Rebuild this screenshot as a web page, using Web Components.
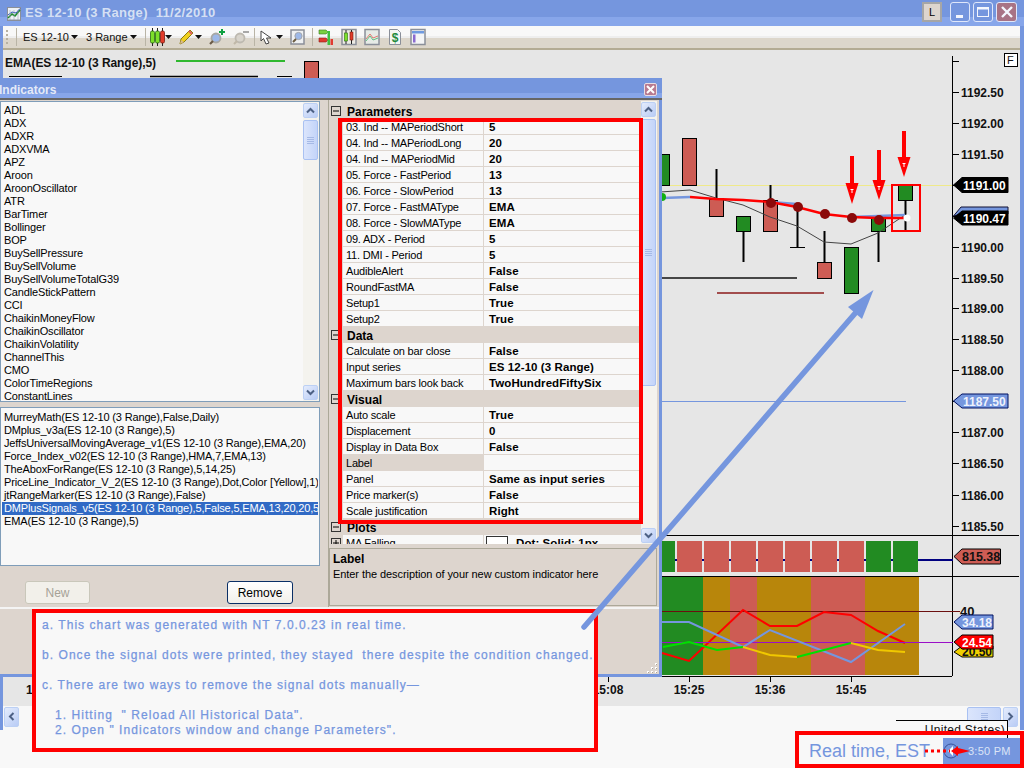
<!DOCTYPE html>
<html><head><meta charset="utf-8">
<style>
html,body{margin:0;padding:0;width:1024px;height:768px;overflow:hidden;background:#f8f8f8;font-family:"Liberation Sans",sans-serif;}
</style></head><body>
<trade-window></trade-window>
<task-strip></task-strip>
<indicators-dialog></indicators-dialog>
<red-frame style="left:338px;top:118px;width:305px;height:406px"></red-frame>
<note-box></note-box>
<clock-note></clock-note>
<callout-arrows></callout-arrows>
<script>
function def(name,css,html,init){
  customElements.define(name,class extends HTMLElement{
    constructor(){super();const s=this.attachShadow({mode:'open'});
      const h=typeof html==='function'?html(this):html;
      s.innerHTML='<style>'+css+'</style>'+h;
      if(init)init(this,s);}
  });
}
const BLUE='#7596de',FACE='#ddd5ce',LIGHT='#f8f8f8';
const chev=d=>`<svg width="9" height="7" viewBox="0 0 9 7"><path d="${d=='up'?'M1 5.5 4.5 2 8 5.5':d=='down'?'M1 1.500 4.500 5 8 1.500':''}" fill="none" stroke="#4d6185" stroke-width="2"/></svg>`;
def('scroll-btn',`:host{display:flex;align-items:center;justify-content:center;width:15px;height:15px;box-sizing:border-box;border:1px solid #bcd0f4;border-radius:2px;background:linear-gradient(135deg,#e4ecfd,#b9ccf5);flex:none}`,
  t=>t.getAttribute('dir')=='left'?`<svg width="7" height="9" viewBox="0 0 7 9"><path d="M5.5 1 2 4.5 5.5 8" fill="none" stroke="#4d6185" stroke-width="2"/></svg>`:t.getAttribute('dir')=='right'?`<svg width="7" height="9" viewBox="0 0 7 9"><path d="M1.5 1 5 4.5 1.5 8" fill="none" stroke="#4d6185" stroke-width="2"/></svg>`:chev(t.getAttribute('dir')));
def('scroll-thumb',`:host{display:flex;align-items:center;justify-content:center;box-sizing:border-box;border:1px solid #a9c1f2;border-radius:2px;background:linear-gradient(90deg,#dbe5fc,#c3d4f9);flex:none}
  i{display:block;width:7px;height:7px;background:repeating-linear-gradient(#a5b9e6 0 1px,transparent 1px 2px)}`,`<i></i>`);
def('v-scroll',`:host{display:flex;flex-direction:column;width:16px;background:#f4f3ee;flex:none;box-sizing:border-box;padding:1px 0;height:100%}
  .sp{flex:1}`,t=>`<scroll-btn dir="up"></scroll-btn><scroll-thumb style="height:${t.getAttribute('thumb')}px;width:15px;margin-top:2px"></scroll-thumb><div class="sp"></div><scroll-btn dir="down"></scroll-btn>`);

def('win-btn',`:host{display:flex;width:20px;height:20px;box-sizing:border-box;border:1px solid #dfe7fa;border-radius:3px;background:#7596de;align-items:center;justify-content:center;flex:none}
  :host([kind=close]){background:#a87385;width:21px}`,
  t=>{const k=t.getAttribute('kind');
   if(k=='min')return `<svg width="14" height="14"><rect x="3" y="10" width="7" height="3" fill="#f4f6fd"/></svg>`;
   if(k=='max')return `<svg width="14" height="14"><rect x="1.5" y="2.5" width="11" height="9" fill="none" stroke="#f4f6fd"/><rect x="1" y="2" width="12" height="2.500" fill="#f4f6fd"/></svg>`;
   return `<svg width="14" height="14"><path d="M2 2 12 12M12 2 2 12" stroke="#f4f6fd" stroke-width="2.4"/></svg>`;});
def('app-title',`:host{display:flex;align-items:flex-start;height:26px;box-sizing:border-box;background:linear-gradient(#7596de 0 17px,#87a6ea 17px);color:#dbe4f6;position:relative}
  .ic{margin:7px 4px 0 7px;flex:none}
  .t{font:bold 13px/26px "Liberation Sans",sans-serif;letter-spacing:.32px;white-space:pre;flex:1;opacity:.95}
  .l{width:20px;height:20px;box-sizing:border-box;border:2px solid #a6a6a6;background:${FACE};color:#000;font:11px/16px "Liberation Sans",sans-serif;text-align:center;margin:2px 8px 0 0}
  .b{display:flex;gap:3px;margin:2px 7px 0 0}`,
 `<svg class="ic" width="14" height="14" viewBox="0 0 14 14"><rect x=".5" y=".5" width="13" height="13" fill="#eef2f7" stroke="#8a8f99"/><path d="M1 11 5 7 8 9 13 3" fill="none" stroke="#1d8a2d" stroke-width="1.6"/><path d="M1 8 5 5 9 6 13 1.5" fill="none" stroke="#2c52b8"/><path d="M1 12.5H13M3 3V13M7 3V13M11 3V13" stroke="#9aa2b0" stroke-width=".6"/></svg>
  <div class="t">ES 12-10 (3 Range)  11/2/2010</div><div class="l">L</div><div class="b"><win-btn kind="min"></win-btn><win-btn kind="max"></win-btn><win-btn kind="close"></win-btn></div>`);
const caret=`<svg width="7" height="4" viewBox="0 0 7 4" style="flex:none"><path d="M0 0H7L3.5 4Z" fill="#111"/></svg>`;
const gap=w=>`<span style="width:${w}px;flex:none"></span>`;
def('app-toolbar',`:host{display:flex;align-items:center;height:24px;box-sizing:border-box;background:linear-gradient(#f8f8f8 0 10px,#eee 10px 12px,#dcd6cb 12px 22px,#b3ab93 22px);font:11px "Liberation Sans",sans-serif;color:#111;padding-left:3px;padding-bottom:2px}
  .hd{width:2px;height:15px;margin:0 8px 0 0;background:repeating-linear-gradient(#b7b1a2 0 2px,transparent 2px 4px);flex:none}
  .sp{width:1px;height:18px;background:#b9b4a6;flex:none}
  .i{display:flex;align-items:center;flex:none;white-space:nowrap}
  svg{flex:none}`,
 `<div class="hd"></div><div class="sp"></div>${gap(6)}
  <span class="i" style="width:47.5px">ES 12-10</span>${caret}
  ${gap(8.5)}<span class="i" style="width:44px">3 Range</span>${caret}
  ${gap(7.5)}<div class="sp"></div>${gap(4)}
  <svg width="15" height="18" viewBox="0 0 15 18"><path d="M2.500 0V18M7.500 0V18M12.500 0V18" stroke="#222"/><rect x=".5" y="3" width="4" height="12" rx="1.500" fill="#7ce02a" stroke="#2a6a10" stroke-width=".8"/><rect x="5.500" y="3" width="4" height="12" rx="1.500" fill="#7ce02a" stroke="#2a6a10" stroke-width=".8"/><rect x="10.500" y="3" width="4" height="12" rx="1.500" fill="#e23c2a" stroke="#7a1d10" stroke-width=".8"/></svg>
  ${gap(.5)}${caret}${gap(6.5)}
  <svg width="15" height="16" viewBox="0 0 15 16"><path d="M1 15 2 10 11 1 14 4 5 13Z" fill="#f0d020" stroke="#8a7a10"/><path d="M1 15 2 11 5 13Z" fill="#d8b890"/><path d="M10 2 13 5" stroke="#e06060" stroke-width="2"/></svg>
  ${gap(1)}${caret}${gap(6)}
  <svg width="18" height="18" viewBox="0 0 18 18"><circle cx="8" cy="10" r="4.500" fill="#9db8e8" stroke="#a8a8a4" stroke-width="1.800"/><path d="M5 13 2 16" stroke="#6a5a48" stroke-width="2.200"/><path d="M14 1V7M11 4H17" stroke="#0ea040" stroke-width="2"/></svg>
  ${gap(6)}
  <svg width="18" height="18" viewBox="0 0 18 18"><circle cx="8" cy="10" r="4.500" fill="#d8d4cc" stroke="#bdb9b0" stroke-width="1.800"/><path d="M5 13 2 16" stroke="#c0b8a8" stroke-width="2.200"/><path d="M11 4H17" stroke="#a8a8a8" stroke-width="2"/></svg>
  ${gap(4)}<div class="sp"></div>${gap(5)}
  <svg width="14" height="15" viewBox="0 0 14 15"><path d="M1 1V11L3.5 8.5 6 14 9 13 6.5 8H11Z" fill="#fff" stroke="#444"/></svg>
  ${gap(2)}${caret}${gap(7)}
  <svg width="15" height="16" viewBox="0 0 15 16"><rect x="1" y="1" width="13" height="14" fill="#eef0f2" stroke="#8a8f99" stroke-width="1.500"/><circle cx="8.500" cy="7" r="3.600" fill="#9db8e8" stroke="#a0a4ac"/><path d="M6 10 3 13" stroke="#6a5a40" stroke-width="2"/></svg>
  ${gap(7)}<div class="sp"></div>${gap(5)}
  <svg width="16" height="18" viewBox="0 0 16 18"><path d="M1 2H8L10 4 8 6H1Z" fill="#7ad040" stroke="#3a7a20" stroke-width=".6"/><path d="M1 10H8L10 12 8 14H1Z" fill="#e03a30" stroke="#902018" stroke-width=".6"/><rect x="9.500" y="3" width="2.500" height="14" fill="#3fc040"/><rect x="12.500" y="11" width="2.500" height="6" fill="#e03a30"/></svg>
  ${gap(7)}
  <svg width="16" height="18" viewBox="0 0 16 18"><rect x="1" y="1.500" width="14" height="15" fill="#ecebe4" stroke="#8a8f99" stroke-width="1.500"/><path d="M5 2V16M10.500 2V16" stroke="#222"/><rect x="3.500" y="5" width="3" height="8" fill="#7ce02a" stroke="#2a6a10" stroke-width=".6"/><rect x="9" y="4" width="3" height="8" fill="#e23c2a" stroke="#7a1d10" stroke-width=".6"/></svg>
  ${gap(7)}
  <svg width="16" height="18" viewBox="0 0 16 18"><rect x="1" y="1.500" width="14" height="15" fill="#e6ebe6" stroke="#8a8f99" stroke-width="1.500"/><path d="M2 11 6 6 9 10 14 8" fill="none" stroke="#e07a70"/><path d="M2 13 6 8 9 12 14 10" fill="none" stroke="#60c080"/></svg>
  ${gap(7)}
  <svg width="16" height="18" viewBox="0 0 16 18"><path d="M2.500 1.500H10.500L13.500 4.500V16.500H2.500Z" fill="#f4f6f4" stroke="#8a8f99"/><text x="8" y="14" text-anchor="middle" style="font:bold 12px 'Liberation Sans';fill:#1e8a3c">$</text></svg>
  ${gap(7)}
  <svg width="16" height="18" viewBox="0 0 16 18"><rect x="1" y="1.500" width="14" height="15" fill="#f4f5f6" stroke="#8a8f99" stroke-width="1.500"/><rect x="2" y="3" width="12" height="2.500" fill="#6f9ae0"/><rect x="3" y="6.500" width="2.500" height="8" fill="#8a6ad0"/></svg>`);

def('price-chart',`:host{display:block;flex:1;min-height:0;background:#e6e6e6}
  svg{display:block}text{font:bold 12px "Liberation Sans",sans-serif;fill:#111}`,()=>{
 const r=(x,y,w,h,f,s)=>`<rect x="${x}" y="${y}" width="${w}" height="${h}" fill="${f}"${s?` stroke="${s}"`:''}/>`;
 const l=(a,b,c,d,s,w)=>`<path d="M${a} ${b}L${c} ${d}" stroke="${s||'#000'}" stroke-width="${w||1}" fill="none"/>`;
 const pl=(pts,s,w)=>`<polyline points="${pts}" fill="none" stroke="${s}" stroke-width="${w}"/>`;
 const G='#228b22',R='#cd5c54',Y='#b8860b';
 let o='';
 o+=`<text x="5" y="67" style="letter-spacing:-.07px">EMA(ES 12-10 (3 Range),5)</text>`+r(176,60,109,2,'#2fb82f');
 o+=l(9,76.5,62,76.5)+l(150,76.5,258,76.5,'#000',1.5)+l(277,76.5,292,76.5);
 o+=`<rect x="304.5" y="61.5" width="14" height="20" fill="${R}" stroke="#000"/>`;
 o+=l(662,185.5,953,185.5,'#efe98a');o+=l(662,401.5,906,401.5,BLUE);
 o+=l(662,278,797,278,'#111',1.6)+l(717,293,824,293,'#8b1a1a',1.6);
 [[716,169,199],[743,231,262],[770,185,200],[797,203,247],[824,231,262],[878,231,262],[905,200,230]].forEach(w=>o+=l(w[0]+.5,w[1],w[0]+.5,w[2],'#000',2));
 o+=l(790,247.5,805,247.5);
 [[655,154,G,31],[682,138,R,47],[709,199,R,17],[736,216,G,15],[763,200,R,31],[817,262,R,16],[844,247,G,46],[871,216,G,15],[898,185,G,15]].forEach(c=>o+=`<rect x="${c[0]+.5}" y="${c[1]+.5}" width="14" height="${c[3]}" fill="${c[2]}" stroke="#000"/>`);
 o+=pl('660,192 690,190 716,198 743,205 770,217 797,226 824,242 851,244 878,233 905,215','#444',1);
 o+=pl('662,198 690,197','#7596de',2.5)+pl('770,202 797,204','#7596de',2.5)+pl('851,217 905,215','#7596de',2.5);
 o+=pl('690,197 716,199 743,200 770,202 797,207 824,214 851,217 878,218 905,218','#f00',2.4);
 [[771,203],[798,207],[825,214],[852,218],[879,220]].forEach(d=>o+=`<circle cx="${d[0]}" cy="${d[1]}" r="5" fill="#8b0a0a"/>`);
 o+=`<circle cx="662" cy="197" r="4" fill="#10b010"/><circle cx="907" cy="218" r="3.5" fill="#fff"/>`;
 [[852,156,183,204],[879,150,180,200],[904,131,157,177]].forEach(a=>{
   o+=r(a[0]-2,a[1],4,a[2]-a[1],'#f00')+`<path d="M${a[0]-6.5} ${a[2]}H${a[0]+6.5}L${a[0]} ${a[3]}Z" fill="#f00"/><path d="M${a[0]-1.5} ${a[2]+6.5}H${a[0]+1.5}M${a[0]} ${a[2]+6.5}V${a[2]+10}" stroke="#fff"/>`;});
 o+=`<rect x="892" y="185" width="28" height="46" fill="none" stroke="#f00" stroke-width="2"/>`;
 o+=l(3,535.5,1019,535.5)+l(662,576.5,1019,576.5);
 o+=l(952.5,56,952.5,676)+l(953,61.5,959,61.5);
 const lab=['1192.50','1192.00','1191.50','1191.00','1190.50','1190.00','1189.50','1189.00','1188.50','1188.00','1187.50','1187.00','1186.50','1186.00','1185.50'];
 const ys=[92,123,154,185,216,247,278,308,339,370,401,432,463,495,526];
 lab.forEach((t,i)=>{o+=l(953,ys[i]+.5,959,ys[i]+.5);if(i!=3&&i!=4&&i!=10)o+=`<text x="961" y="${ys[i]+4.5}">${t}</text>`;});
 o+=`<rect x="1004.5" y="53.5" width="13" height="13" fill="#fff" stroke="#000"/><text x="1007" y="64" style="font:11px 'Liberation Sans'">F</text>`;
 const mk=(y,w,h,f,st,tx,t)=>{return `<path d="M953.5 ${y} 962 ${y-h/2}H${953+w}V${y+h/2}H962Z" fill="${f}" stroke="${st}"/><text x="963" y="${y+4.5}" style="fill:${tx}">${t}</text>`;};
 o+=`<path d="M953.5 216 961 207H1008V214H961Z" fill="${BLUE}" stroke="#113"/>`;
 o+=mk(185,55,15,'#000','#000','#fff','1191.00');
 o+=mk(218,55,14,'#000','#000','#fff','1190.47');
 o+=mk(401,55,14,BLUE,'#001060','#eef2fc','1187.50');
 o+=l(662,560,953,560,'#000080',2);
 o+=r(655,541,20,31,G);
 [677,704,731,758,785,812,839].forEach(x=>o+=r(x,541,25,31,R));
 [866,893].forEach(x=>o+=r(x,541,25,31,G));
 o+=l(918,560,953,560,'#000080',2);
 o+=`<path d="M954 556.5 962 549H1000.5V564H962Z" fill="${R}" stroke="#000"/><text x="962" y="561" style="font-size:12.5px">815.38</text>`;
 [[655,48,G],[703,27,Y],[730,27,R],[757,54,Y],[811,54,R],[865,54,Y]].forEach(b=>o+=r(b[0],577,b[1],98,b[2]));
 o+=l(662,611.5,960,611.5,'#6b0f0f');
 o+=`<text x="960" y="616" style="font-size:13px">40</text>`;
 o+=pl('662,653 689,661 743,610 770,626 797,626 824,612 851,615 878,631 905,643','#f00',2);
 o+=l(662,642.5,953,642.5,'#9a10c8');
 o+=pl('662,622 689,622 743,647 770,630 851,662 905,624',BLUE,2);
 o+=pl('663,647 689,642 717,650 743,647','#00e000',2)+pl('743,647 770,655 797,657','#f0c800',2)+pl('797,657 851,643','#00e000',2)+pl('851,643 878,650 905,652','#f0c800',2);
 o+=`<path d="M954 652 962 646H993V657H962Z" fill="#f0d000" stroke="#000"/><text x="962" y="656">20.50</text>`;
 o+=`<path d="M954 622 962 615H993V629H962Z" fill="${BLUE}" stroke="#001060"/><text x="962" y="626.5" style="fill:#eef2fc">34.18</text>`;
 o+=`<path d="M954 642 962 635H993V649H962Z" fill="#f00" stroke="#000"/><text x="962" y="646.5" style="fill:#fff">24.54</text>`;
 o+=l(3,676.5,952,676.5);
 [[608,'15:08'],[689,'15:25'],[770,'15:36'],[851,'15:45']].forEach(t=>{o+=l(t[0]+.5,677,t[0]+.5,682)+`<text x="${t[0]}" y="694" text-anchor="middle">${t[1]}</text>`;});
 o+=`<text x="26" y="694">18</text>`;
 return `<svg width="1017" height="656" viewBox="3 50 1017 656">${o}</svg>`;
});
def('bottom-scroll',`:host{display:flex;height:24px;box-sizing:border-box;background:${LIGHT};align-items:center;padding:0 2px 3px 1px}
 .sp{flex:1}`,`<scroll-btn dir="left" style="height:20px;width:15px"></scroll-btn><div class="sp"></div><scroll-thumb style="width:34px;height:20px"></scroll-thumb><span style="width:2px"></span><scroll-btn dir="right" style="height:20px"></scroll-btn>`);
def('trade-window',`:host{display:flex;flex-direction:column;height:730px;box-sizing:border-box;background:${BLUE}}
 .in{flex:1;min-height:0;display:flex;flex-direction:column;margin:0 4px 0 3px}`,
 `<app-title></app-title><div class="in"><app-toolbar></app-toolbar><price-chart></price-chart><bottom-scroll></bottom-scroll></div>`);
def('task-strip',`:host{display:block;height:38px;background:${LIGHT}}`,``);

def('list-box',`:host{display:flex;box-sizing:border-box;border:1px solid #7f9db9;background:${LIGHT};overflow:hidden;font:11px/13px "Liberation Sans",sans-serif;letter-spacing:-.15px;color:#000}
 .l{flex:1;min-width:0;padding:var(--pt,2px) 1px 0}`,`<div class="l"><slot></slot></div><slot name="bar"></slot>`);
def('list-item',`:host{display:block;height:13px;padding-left:2px;white-space:nowrap;overflow:hidden}
 :host([sel]){background:#316ac5;color:#fff}`,`<slot></slot>`);
def('xp-button',`:host{display:flex;align-items:center;justify-content:center;box-sizing:border-box;width:66px;height:23px;border:1px solid #0a2f66;border-radius:3px;background:linear-gradient(#fff,#f2f0ea);font:12px "Liberation Sans",sans-serif;color:#000}
 :host([off]){border-color:#c9c7ba;background:#f2f0ea;color:#a6a297;width:65px}`,`<slot></slot>`);
def('prop-head',`:host{display:flex;height:16px;align-items:center;font:bold 12px "Liberation Sans",sans-serif;color:#000;background:${FACE};white-space:nowrap}
 .t{width:14px;flex:none;display:flex;justify-content:center}.x{flex:1;padding:1px 0 0 4px}`,
 `<div class="t"><svg width="10" height="10"><rect x=".5" y=".5" width="9" height="9" fill="none" stroke="#333"/><path d="M2 5H8" stroke="#000"/></svg></div><div class="x"><slot></slot></div>`);
def('prop-row',`:host{display:flex;height:16px;font:11px/17px "Liberation Sans",sans-serif;color:#000;white-space:nowrap}
 .t{width:14px;flex:none;background:${FACE};display:flex;justify-content:center;align-items:center}
 .n{width:141px;box-sizing:border-box;padding-left:3px;flex:none;background:${LIGHT};border-right:1px solid ${FACE};border-bottom:1px solid ${FACE};letter-spacing:-.2px;overflow:hidden}
 :host([hl]) .n{background:${FACE}}
 .v{flex:1;box-sizing:border-box;padding:1px 0 0 5px;background:${LIGHT};border-bottom:1px solid ${FACE};font:bold 11.5px/15px "Liberation Sans",sans-serif;letter-spacing:.08px;display:flex;align-items:center}
 i{display:block;width:20px;height:13px;border:1px solid #333;background:#fff;margin:1px 8px 0 -3px;flex:none}`,
 t=>`<div class="t">${t.hasAttribute('plus')?'<svg width="10" height="10"><rect x=".5" y=".5" width="9" height="9" fill="none" stroke="#333"/><path d="M2 5H8M5 2V8" stroke="#000"/></svg>':''}</div><div class="n">${t.getAttribute('n')}</div><div class="v">${t.hasAttribute('plus')?'<i></i>':''}<slot></slot></div>`);
def('indicators-dialog',`:host{position:absolute;left:0;top:78px;width:662px;height:599px;box-sizing:border-box;background:${BLUE};display:flex;flex-direction:column;padding:0 3px 3px 0}
 .title{height:22px;flex:none;display:flex;align-items:flex-start;background:linear-gradient(#7596de 0 15px,#87a6ea 15px 20px,#666 20px);color:#e4eaf8;font:bold 12px/24px "Liberation Sans",sans-serif;margin-right:-3px;padding-right:5px;box-sizing:border-box;white-space:nowrap}
 .title span{flex:1;margin-left:-1px}
 .cl{width:13px;height:13px;margin-top:5px;background:#b87a90;border:1px solid #e8dde4;border-radius:2px;box-sizing:border-box;display:flex;align-items:center;justify-content:center}
 .body{flex:1;min-height:0;display:flex;flex-direction:column;background:${FACE}}
 .top{height:507px;flex:none;display:flex;border-bottom:2px solid #f4f4f4;box-sizing:content-box}
 .lc{width:328px;flex:none;display:flex;flex-direction:column;padding:1px 8px 0 0;box-sizing:border-box;gap:5px}
 .rc{flex:1;min-width:0;border-left:1px solid #aca899;display:flex;flex-direction:column;padding:1px 2px 0 0;box-sizing:border-box;gap:4px}
 .btns{display:flex;justify-content:space-between;padding:10px 27px 0 25px}
 .grid{flex:none;height:443px;display:flex;overflow:hidden;box-sizing:border-box}
 .rows{flex:1;min-width:0;overflow:hidden;padding-top:2px}
 .desc{flex:none;height:58px;border:1px solid #aca899;box-sizing:border-box;padding:3px 3px;font:11px/15px "Liberation Sans",sans-serif;color:#000;letter-spacing:-.07px;white-space:nowrap}
 .desc b{display:block;font-size:12px;letter-spacing:0}
 .low{flex:1;position:relative}
 .grip{position:absolute;right:1px;bottom:1px}`,
`<div class="title"><span>Indicators</span><div class="cl"><svg width="9" height="9"><path d="M1 1 8 8M8 1 1 8" stroke="#fff" stroke-width="2"/></svg></div></div>
<div class="body"><div class="top"><div class="lc">
<list-box style="height:301px"><list-item>ADL</list-item><list-item>ADX</list-item><list-item>ADXR</list-item><list-item>ADXVMA</list-item><list-item>APZ</list-item><list-item>Aroon</list-item><list-item>AroonOscillator</list-item><list-item>ATR</list-item><list-item>BarTimer</list-item><list-item>Bollinger</list-item><list-item>BOP</list-item><list-item>BuySellPressure</list-item><list-item>BuySellVolume</list-item><list-item>BuySellVolumeTotalG39</list-item><list-item>CandleStickPattern</list-item><list-item>CCI</list-item><list-item>ChaikinMoneyFlow</list-item><list-item>ChaikinOscillator</list-item><list-item>ChaikinVolatility</list-item><list-item>ChannelThis</list-item><list-item>CMO</list-item><list-item>ColorTimeRegions</list-item><list-item>ConstantLines</list-item><v-scroll slot="bar" thumb="40"></v-scroll></list-box>
<list-box style="height:159px;--pt:3px"><list-item>MurreyMath(ES 12-10 (3 Range),False,Daily)</list-item><list-item>DMplus_v3a(ES 12-10 (3 Range),5)</list-item><list-item>JeffsUniversalMovingAverage_v1(ES 12-10 (3 Range),EMA,20)</list-item><list-item>Force_Index_v02(ES 12-10 (3 Range),HMA,7,EMA,13)</list-item><list-item>TheAboxForRange(ES 12-10 (3 Range),5,14,25)</list-item><list-item>PriceLine_Indicator_V_2(ES 12-10 (3 Range),Dot,Color [Yellow],1)</list-item><list-item>jtRangeMarker(ES 12-10 (3 Range),False)</list-item><list-item sel>DMPlusSignals_v5(ES 12-10 (3 Range),5,False,5,EMA,13,20,20,5,</list-item><list-item>EMA(ES 12-10 (3 Range),5)</list-item></list-box>
<div class="btns"><xp-button off>New</xp-button><xp-button>Remove</xp-button></div>
</div><div class="rc"><div class="grid"><div class="rows">
<prop-head>Parameters</prop-head>
<prop-row n="03. Ind -- MAPeriodShort">5</prop-row><prop-row n="04. Ind -- MAPeriodLong">20</prop-row><prop-row n="04. Ind -- MAPeriodMid">20</prop-row><prop-row n="05. Force - FastPeriod">13</prop-row><prop-row n="06. Force - SlowPeriod">13</prop-row><prop-row n="07. Force - FastMAType">EMA</prop-row><prop-row n="08. Force - SlowMAType">EMA</prop-row><prop-row n="09. ADX - Period">5</prop-row><prop-row n="11. DMI - Period">5</prop-row><prop-row n="AudibleAlert">False</prop-row><prop-row n="RoundFastMA">False</prop-row><prop-row n="Setup1">True</prop-row><prop-row n="Setup2">True</prop-row>
<prop-head>Data</prop-head>
<prop-row n="Calculate on bar close">False</prop-row><prop-row n="Input series">ES 12-10 (3 Range)</prop-row><prop-row n="Maximum bars look back">TwoHundredFiftySix</prop-row>
<prop-head>Visual</prop-head>
<prop-row n="Auto scale">True</prop-row><prop-row n="Displacement">0</prop-row><prop-row n="Display in Data Box">False</prop-row><prop-row n="Label" hl></prop-row><prop-row n="Panel">Same as input series</prop-row><prop-row n="Price marker(s)">False</prop-row><prop-row n="Scale justification">Right</prop-row>
<prop-head>Plots</prop-head>
<prop-row n="MA Falling" plus>Dot: Solid: 1px</prop-row>
</div><v-scroll thumb="267"></v-scroll></div>
<div class="desc"><b>Label</b>Enter the description of your new custom indicator here</div>
</div></div><div class="low"><svg class="grip" width="11" height="11"><g fill="#fff"><rect x="8" y="1" width="2" height="2"/><rect x="4" y="5" width="2" height="2"/><rect x="8" y="5" width="2" height="2"/><rect x="0" y="9" width="2" height="2"/><rect x="4" y="9" width="2" height="2"/><rect x="8" y="9" width="2" height="2"/></g><g fill="#aaa398"><rect x="9" y="2" width="1" height="1"/><rect x="5" y="6" width="1" height="1"/><rect x="9" y="6" width="1" height="1"/><rect x="1" y="10" width="1" height="1"/><rect x="5" y="10" width="1" height="1"/><rect x="9" y="10" width="1" height="1"/></g></svg></div></div>`);
def('red-frame',`:host{position:absolute;display:block;box-sizing:border-box;border:4px solid #f00}`,``);
def('note-box',`:host{position:absolute;left:32px;top:609px;width:566px;height:143px;box-sizing:border-box;border:4px solid #f00;background:#f8f8f8;color:${BLUE};font:12px/15px "Liberation Sans",sans-serif;letter-spacing:1.05px;-webkit-text-stroke:.25px ${BLUE};white-space:pre;padding:5px 0 0 6px}
 div{height:15px} .i{padding-left:13px}`,
 `<div>a. This chart was generated with NT 7.0.0.23 in real time.</div><div></div><div>b. Once the signal dots were printed, they stayed  there despite the condition changed.</div><div></div><div>c. There are two ways to remove the signal dots manually—</div><div></div><div class="i">1. Hitting  " Reload All Historical Data".</div><div class="i">2. Open " Indicators window and change Parameters".</div>`);
def('clock-note',`:host{position:absolute;left:795px;top:720px;width:229px;height:48px;display:block}
 .tip{position:absolute;left:101px;top:0;width:112px;height:11px;border-top:1px solid #000;border-right:1px solid #000;box-sizing:border-box;background:${LIGHT};font:12px/17px "Liberation Sans",sans-serif;text-align:right;padding:1px 2px 0 0;color:#111;white-space:nowrap;overflow:hidden;letter-spacing:.3px}
 .fr{position:absolute;left:0;top:11px;right:0;bottom:0;box-sizing:border-box;border:4px solid #f00;background:#f8f8f8;display:flex;align-items:center;justify-content:space-between;padding-left:10px;color:${BLUE};font:18px "Liberation Sans",sans-serif}
 .fr>span{padding-top:3px}
 .bl{position:absolute;left:212px;top:15px;width:1px;height:3px;background:#000}
 .cl{width:77px;height:26px;align-self:flex-end;background:${BLUE};color:#dbe4f6;font:11px/26px "Liberation Sans",sans-serif;letter-spacing:.25px;box-sizing:border-box;padding-left:25px;position:relative;white-space:nowrap}`,
 `<div class="fr"><span>Real time, EST</span><div class="cl">3:50 PM</div></div><div class="tip">United States)</div><div class="bl"></div>`);
def('callout-arrows',`:host{position:absolute;left:0;top:0;width:1024px;height:768px;display:block;pointer-events:none}svg{display:block}`,
 `<svg width="1024" height="768"><path d="M584 627 858 310" stroke="${BLUE}" stroke-width="5.500" stroke-linecap="round"/><path d="M873.500 290 848 307 862 319Z" fill="${BLUE}"/>
 <circle cx="951" cy="751" r="7" fill="none" stroke="#39539a"/><path d="M948 751 953 746V756Z" fill="#fff"/>
 <path d="M925 751H950" stroke="#f00" stroke-width="3" stroke-dasharray="3 3"/><path d="M951 751 958 746V756Z M958 748 970 751 958 754Z" fill="#f00"/></svg>`);
</script>
</body></html>
